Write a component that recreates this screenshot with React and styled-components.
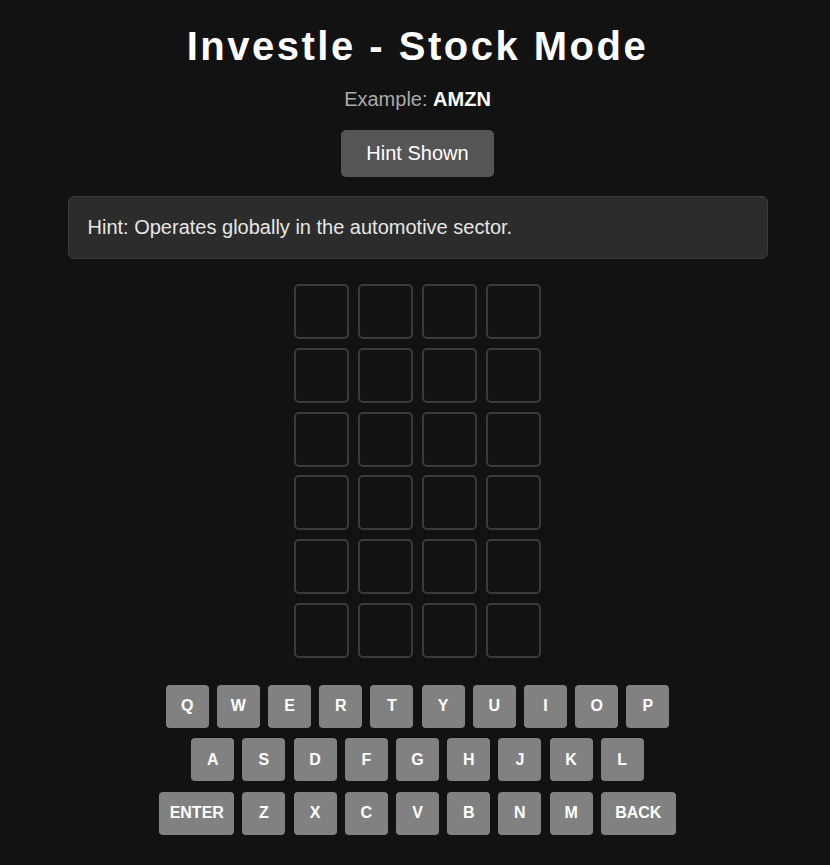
import styled, { createGlobalStyle } from "styled-components";

const GlobalStyle = createGlobalStyle`
  body {
    margin: 0 0 0 5px;
    background-color: #121212;
    font-family: "Liberation Sans", Arial, sans-serif;
    color: #fff;
  }
`;

const ROWS = 6;
const COLS = 4;

const KEY_ROWS = [
  ["Q", "W", "E", "R", "T", "Y", "U", "I", "O", "P"],
  ["A", "S", "D", "F", "G", "H", "J", "K", "L"],
  ["ENTER", "Z", "X", "C", "V", "B", "N", "M", "BACK"],
];

const App = () => {
  const board = Array.from({ length: ROWS }, () => Array(COLS).fill(""));

  return (
    <>
      <GlobalStyle />
      <Page>
        <Title>Investle - Stock Mode</Title>
        <Example>
          Example: <strong>AMZN</strong>
        </Example>
        <HintButton>Hint Shown</HintButton>
        <HintBox>Hint: Operates globally in the automotive sector.</HintBox>
        <Board>
          {board.map((row, r) =>
            row.map((letter, c) => <Tile key={`${r}-${c}`}>{letter}</Tile>)
          )}
        </Board>
        <Keyboard>
          {KEY_ROWS.map((row, i) => (
            <KeyRow key={i}>
              {row.map((k) => (
                <Key key={k} $wide={k.length > 1}>
                  {k}
                </Key>
              ))}
            </KeyRow>
          ))}
        </Keyboard>
      </Page>
    </>
  );
};

const Page = styled.div`
  display: flex;
  flex-direction: column;
  align-items: center;
  padding-top: 23px;
`;

const Title = styled.h1`
  margin: 0;
  font-size: 40px;
  font-weight: bold;
  letter-spacing: 2.5px;
  line-height: 46px;
  color: #fff;
`;

const Example = styled.p`
  margin: 19px 0 0;
  font-size: 20px;
  line-height: 23px;
  color: #aaa;

  strong {
    color: #fff;
  }
`;

const HintButton = styled.button`
  margin-top: 19px;
  padding: 12px 25px;
  font-family: "Liberation Sans", Arial, sans-serif;
  font-size: 20px;
  line-height: 23px;
  color: #fff;
  background-color: #555;
  border: none;
  border-radius: 5px;
  cursor: pointer;
`;

const HintBox = styled.div`
  box-sizing: border-box;
  width: 700px;
  margin-top: 19px;
  padding: 19px 19px;
  font-size: 20px;
  line-height: 23px;
  color: #e6e6e6;
  background-color: #2c2c2c;
  border: 1px solid #3c3c3c;
  border-radius: 6px;
`;

const Board = styled.div`
  display: grid;
  grid-template-columns: repeat(4, 55px);
  grid-auto-rows: 55px;
  gap: 8.8px;
  margin-top: 25px;
`;

const Tile = styled.div`
  box-sizing: border-box;
  border: 2px solid #3a3a3c;
  border-radius: 5px;
  display: flex;
  align-items: center;
  justify-content: center;
  font-size: 28px;
  font-weight: bold;
`;

const Keyboard = styled.div`
  display: flex;
  flex-direction: column;
  align-items: center;
  gap: 10.5px;
  margin-top: 27px;
  padding-bottom: 30px;
`;

const KeyRow = styled.div`
  display: flex;
  gap: 8.2px;
`;

const Key = styled.button`
  width: ${(p) => (p.$wide ? "75px" : "43px")};
  height: 43px;
  padding: 0;
  font-family: "Liberation Sans", Arial, sans-serif;
  font-size: 16px;
  font-weight: bold;
  color: #fff;
  background-color: #818181;
  border: none;
  border-radius: 4px;
  cursor: pointer;
`;

export default App;
